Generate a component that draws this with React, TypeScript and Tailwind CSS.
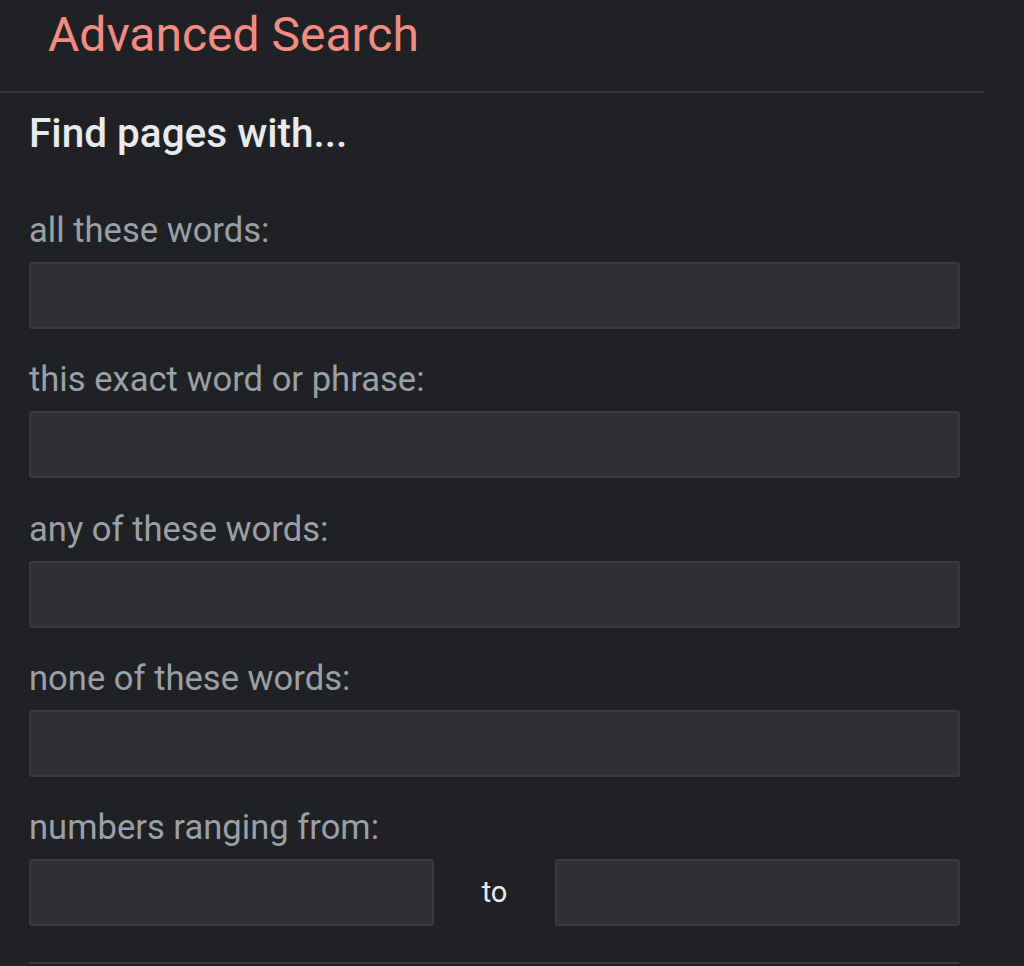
const fields = [
  "all these words:",
  "this exact word or phrase:",
  "any of these words:",
  "none of these words:",
];

const inputClass =
  "h-[67px] rounded-[3px] border-2 border-[#3a3b3e] bg-[#303134] outline-none";

const App = () => {
  return (
    <div className="h-[966px] w-[1024px] overflow-hidden bg-[#202124] font-['Roboto',sans-serif]">
      <header className="h-[93px] w-[984px] border-b-2 border-[#38393c]">
        <h1 className="pl-[48px] pt-[6px] text-[48px] leading-[58px] text-[#f28b82]">
          Advanced Search
        </h1>
      </header>

      <main className="w-[960px] pl-[29px]">
        <h2 className="pt-[16px] text-[40.5px] font-medium leading-[48px] text-[#e8eaed]">
          Find pages with...
        </h2>

        <div className="mt-[53px] flex flex-col gap-[30.3px]">
          {fields.map((label) => (
            <label key={label} className="flex flex-col gap-[12px]">
              <span className="text-[34.6px] leading-[40px] text-[#9aa0a6]">
                {label}
              </span>
              <input type="text" className={`w-full ${inputClass}`} />
            </label>
          ))}

          <div className="flex flex-col gap-[12px]">
            <span className="text-[34.6px] leading-[40px] text-[#9aa0a6]">
              numbers ranging from:
            </span>
            <div className="flex items-center">
              <input type="text" className={`w-[405px] ${inputClass}`} />
              <span className="flex-1 text-center text-[29px] text-[#e8eaed]">to</span>
              <input type="text" className={`w-[405px] ${inputClass}`} />
            </div>
          </div>
        </div>

        <div className="mt-[36px] w-[930px] border-t-2 border-[#38393c]" />
      </main>
    </div>
  );
};

export default App;
